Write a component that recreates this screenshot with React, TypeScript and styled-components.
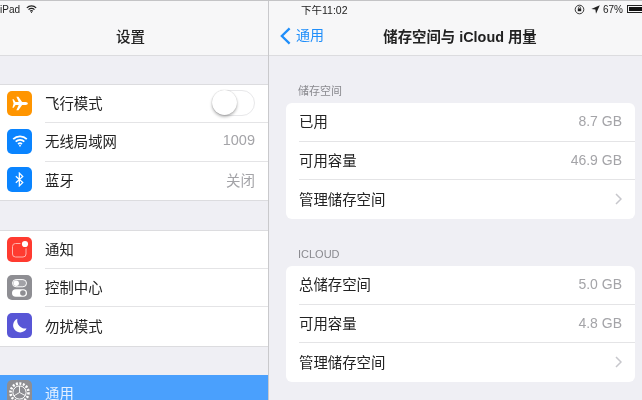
import React from 'react';
import styled, { createGlobalStyle } from 'styled-components';

const GlobalStyle = createGlobalStyle`
  html, body {
    margin: 0;
    padding: 0;
    width: 642px;
    height: 400px;
    overflow: hidden;
    background: #efeff4;
    font-family: "Liberation Sans", "Noto Sans CJK SC", sans-serif;
  }
  * { box-sizing: border-box; }
`;

const Screen = styled.div`
  display: flex;
  width: 642px;
  height: 400px;
  overflow: hidden;
  border-top: 1px solid #c4c4c6;
  filter: blur(0.4px);
`;

const Sidebar = styled.aside`
  flex: none;
  width: 269px;
  height: 399px;
  overflow: hidden;
  border-right: 1px solid #c9c9cc;
`;

const Detail = styled.main`
  flex: 1;
  height: 399px;
  overflow: hidden;
`;

const Header = styled.header`
  height: 55px;
  background: #f7f7f8;
  border-bottom: 1px solid #dcdcdf;
`;

const StatusBar = styled.div`
  display: flex;
  align-items: center;
  height: 17px;
  padding-bottom: 1px;
  font-size: 10.5px;
  color: #222;
`;

const DeviceStatus = styled(StatusBar)`
  gap: 6px;
  font-size: 10px;
`;

const ClockStatus = styled(StatusBar)`
  justify-content: space-between;
  padding-left: 32px;
`;

const StatusIcons = styled.div`
  display: flex;
  align-items: center;
  gap: 3px;
  margin-right: -6px;
  font-size: 10px;
`;

const BatteryShell = styled.div`
  width: 21px;
  height: 8px;
  margin-left: 1px;
  padding: 1px;
  border: 1px solid #222;
`;

const BatteryFill = styled.div`
  width: 80%;
  height: 100%;
  background: #111;
`;

const NavRow = styled.div<{ $side?: boolean }>`
  position: relative;
  display: flex;
  align-items: center;
  justify-content: center;
  height: 37px;
  padding-bottom: 3px;
  padding-right: ${p => (p.$side ? '7px' : '0')};
`;

const NavTitle = styled.h1`
  margin: 0;
  font-size: 14.5px;
  font-weight: 500;
  color: #222;
`;

const DetailTitle = styled(NavTitle)`
  margin-left: 9px;
  font-size: 14.4px;
  font-weight: 600;
`;

const BackLink = styled.div`
  position: absolute;
  left: 11px;
  top: 8px;
  display: flex;
  align-items: center;
  gap: 5px;
  color: #1f8efa;
  font-size: 14px;
  line-height: 19px;
`;

const SideGroup = styled.section<{ $top: number }>`
  margin-top: ${p => p.$top}px;
  background: #fff;
  border-top: 1px solid #dcdcdf;
  border-bottom: 1px solid #dcdcdf;
`;

const SideRow = styled.div<{ $selected?: boolean }>`
  display: flex;
  align-items: center;
  height: 38.3px;
  padding-left: 7px;
  background: ${p => (p.$selected ? '#4aa0fd' : 'transparent')};
  color: ${p => (p.$selected ? '#e4f0ff' : '#222')};
`;

const SelectedGroup = styled.section`
  margin-top: 28px;
`;

const IconTile = styled.div<{ $color: string }>`
  flex: none;
  display: flex;
  align-items: center;
  justify-content: center;
  width: 25px;
  height: 25px;
  margin-bottom: 2px;
  border-radius: 5px;
  background: ${p => p.$color};
`;

const SideBody = styled.div<{ $last?: boolean }>`
  flex: 1;
  display: flex;
  align-items: center;
  justify-content: space-between;
  align-self: stretch;
  margin-left: 13px;
  padding-right: 13px;
  padding-bottom: 3px;
  font-size: 14.4px;
  border-bottom: ${p => (p.$last ? 'none' : '1px solid #e4e4e6')};
`;

const SideValue = styled.span`
  color: #a4a4a8;
  font-size: 14.5px;
`;

const Toggle = styled.div`
  position: relative;
  width: 43px;
  height: 26px;
  margin-top: 1px;
  border: 1px solid #e8e8ea;
  border-radius: 13px;
  background: #fff;
`;

const Knob = styled.div`
  position: absolute;
  left: -1px;
  top: -1px;
  width: 25px;
  height: 25px;
  border-radius: 50%;
  background: #fff;
  box-shadow: 0 2px 3px rgba(0, 0, 0, 0.28), 0 0 1px rgba(0, 0, 0, 0.25);
`;

const Content = styled.div`
  padding: 26px 7px 0 17px;
`;

const SectionLabel = styled.div`
  height: 21px;
  padding-left: 12px;
  font-size: 11px;
  line-height: 18px;
  color: #8a8a8f;
`;

const Card = styled.section`
  background: #fff;
  border-radius: 6px;
  margin-bottom: 26px;
`;

const CardRow = styled.div<{ $last?: boolean }>`
  display: flex;
  align-items: center;
  justify-content: space-between;
  height: 38.7px;
  margin-left: 13px;
  padding-right: 13px;
  padding-bottom: 2px;
  font-size: 14.4px;
  color: #222;
  border-bottom: ${p => (p.$last ? 'none' : '1px solid #e4e4e6')};
`;

const CardValue = styled.span`
  color: #a4a4a8;
  font-size: 14px;
`;

const LockWrap = styled.span`
  display: flex;
  margin-right: 3px;
`;

const WifiGlyph = ({ size, color }: { size: number; color: string }) => (
  <svg width={size} height={size * 0.75} viewBox="0 0 20 15" fill="none" stroke={color} strokeWidth="2.2">
    <path d="M1.5 5.2a12 12 0 0 1 17 0" />
    <path d="M4.6 8.4a7.6 7.6 0 0 1 10.8 0" />
    <path d="M7.6 11.3a3.4 3.4 0 0 1 4.8 0" />
    <circle cx="10" cy="13.4" r="1.1" fill={color} stroke="none" />
  </svg>
);

const PlaneIcon = () => (
  <svg width="16" height="15" viewBox="0 0 19 17" fill="#fff">
    <path d="M0.5 3.5 L2 3.5 L4.2 6.7 L8 6.7 L5.2 0.5 L7.6 0.5 L12 6.7 L16.2 6.7 C18 6.7 18.8 7.8 18.8 8.5 C18.8 9.2 18 10.3 16.2 10.3 L12 10.3 L7.6 16.5 L5.2 16.5 L8 10.3 L4.2 10.3 L2 13.5 L0.5 13.5 L1.9 8.5 Z" />
  </svg>
);

const BluetoothIcon = () => (
  <svg width="9" height="15" viewBox="0 0 11 18" fill="none" stroke="#fff" strokeWidth="1.5">
    <path d="M1 5 L9.5 12.6 L5.3 16.8 L5.3 1.2 L9.5 5.4 L1 13" />
  </svg>
);

const NotifyIcon = () => (
  <svg width="25" height="25" viewBox="0 0 25 25" fill="none">
    <rect x="5.5" y="6.5" width="13.5" height="13.5" rx="3" stroke="#ffb3ad" strokeWidth="1" />
    <circle cx="18" cy="7" r="4.6" fill="#ff3b30" />
    <circle cx="18" cy="7" r="3.1" fill="#fff" />
  </svg>
);

const ControlIcon = () => (
  <svg width="25" height="25" viewBox="0 0 25 25" fill="none">
    <rect x="5.5" y="4.6" width="14" height="7.2" rx="3.6" fill="#a2a2a7" stroke="#fff" strokeWidth="1" />
    <circle cx="9.2" cy="8.2" r="2.7" fill="#fff" />
    <rect x="5" y="14.2" width="15" height="7.6" rx="3.8" fill="#fff" />
    <circle cx="15.9" cy="18" r="2.8" fill="#8e8e93" />
  </svg>
);

const MoonIcon = () => (
  <svg width="15" height="15" viewBox="0 0 18 18" fill="#fff">
    <path d="M6.5 1 A8.5 8.5 0 1 0 17.5 12.5 A9.5 9.5 0 0 1 6.5 1 Z" />
  </svg>
);

const GearIcon = () => (
  <svg width="25" height="25" viewBox="0 0 25 25" fill="none" stroke="#fff">
    <circle cx="12.5" cy="12.5" r="9" strokeWidth="2.6" strokeDasharray="2 1.5" />
    <circle cx="12.5" cy="12.5" r="6.6" strokeWidth="1" />
    <path d="M12.5 12.5 L12.5 6 M12.5 12.5 L18.2 15.5 M12.5 12.5 L7 15.8" strokeWidth="0.9" />
  </svg>
);

const RotationLock = () => (
  <svg width="11" height="11" viewBox="0 0 11 11" fill="none" stroke="#222">
    <circle cx="5.5" cy="5.5" r="4.3" strokeWidth="0.9" />
    <rect x="3.8" y="4.4" width="3.4" height="2.8" fill="#222" stroke="none" />
    <path d="M4.5 4.4V3.6a1 1 0 0 1 2 0v.8" strokeWidth="0.7" />
  </svg>
);

const LocationArrow = () => (
  <svg width="9" height="9" viewBox="0 0 9 9" fill="#222">
    <path d="M8.8 0.2 L0.3 4 L4.4 4.6 L5 8.8 Z" />
  </svg>
);

const BackChevron = () => (
  <svg width="11" height="18" viewBox="0 0 12 19" fill="none" stroke="#1f8efa" strokeWidth="2.5">
    <path d="M10.5 1.2 L2 9.5 L10.5 17.8" />
  </svg>
);

const Chevron = () => (
  <svg width="7" height="12" viewBox="0 0 7 12" fill="none" stroke="#c7c7cc" strokeWidth="1.5">
    <path d="M1 1 L6 6 L1 11" />
  </svg>
);

const App = () => (
  <>
    <GlobalStyle />
    <Screen>
      <Sidebar>
        <Header>
          <DeviceStatus>
            <span>iPad</span>
            <WifiGlyph size={11} color="#222" />
          </DeviceStatus>
          <NavRow $side>
            <NavTitle>设置</NavTitle>
          </NavRow>
        </Header>
        <SideGroup $top={28}>
          <SideRow>
            <IconTile $color="#ff9500"><PlaneIcon /></IconTile>
            <SideBody>飞行模式<Toggle><Knob /></Toggle></SideBody>
          </SideRow>
          <SideRow>
            <IconTile $color="#0a84ff"><WifiGlyph size={16} color="#fff" /></IconTile>
            <SideBody>无线局域网<SideValue>1009</SideValue></SideBody>
          </SideRow>
          <SideRow>
            <IconTile $color="#0a84ff"><BluetoothIcon /></IconTile>
            <SideBody $last>蓝牙<SideValue>关闭</SideValue></SideBody>
          </SideRow>
        </SideGroup>
        <SideGroup $top={29}>
          <SideRow>
            <IconTile $color="#ff3b30"><NotifyIcon /></IconTile>
            <SideBody>通知</SideBody>
          </SideRow>
          <SideRow>
            <IconTile $color="#8e8e93"><ControlIcon /></IconTile>
            <SideBody>控制中心</SideBody>
          </SideRow>
          <SideRow>
            <IconTile $color="#5856d6"><MoonIcon /></IconTile>
            <SideBody $last>勿扰模式</SideBody>
          </SideRow>
        </SideGroup>
        <SelectedGroup>
          <SideRow $selected>
            <IconTile $color="#8e8e93"><GearIcon /></IconTile>
            <SideBody $last>通用</SideBody>
          </SideRow>
        </SelectedGroup>
      </Sidebar>
      <Detail>
        <Header>
          <ClockStatus>
            <span>下午11:02</span>
            <StatusIcons>
              <LockWrap><RotationLock /></LockWrap>
              <LocationArrow />
              <span>67%</span>
              <BatteryShell><BatteryFill /></BatteryShell>
            </StatusIcons>
          </ClockStatus>
          <NavRow>
            <BackLink><BackChevron />通用</BackLink>
            <DetailTitle>储存空间与 iCloud 用量</DetailTitle>
          </NavRow>
        </Header>
        <Content>
          <SectionLabel>储存空间</SectionLabel>
          <Card>
            <CardRow>已用<CardValue>8.7 GB</CardValue></CardRow>
            <CardRow>可用容量<CardValue>46.9 GB</CardValue></CardRow>
            <CardRow $last>管理储存空间<Chevron /></CardRow>
          </Card>
          <SectionLabel>ICLOUD</SectionLabel>
          <Card>
            <CardRow>总储存空间<CardValue>5.0 GB</CardValue></CardRow>
            <CardRow>可用容量<CardValue>4.8 GB</CardValue></CardRow>
            <CardRow $last>管理储存空间<Chevron /></CardRow>
          </Card>
        </Content>
      </Detail>
    </Screen>
  </>
);

export default App;
